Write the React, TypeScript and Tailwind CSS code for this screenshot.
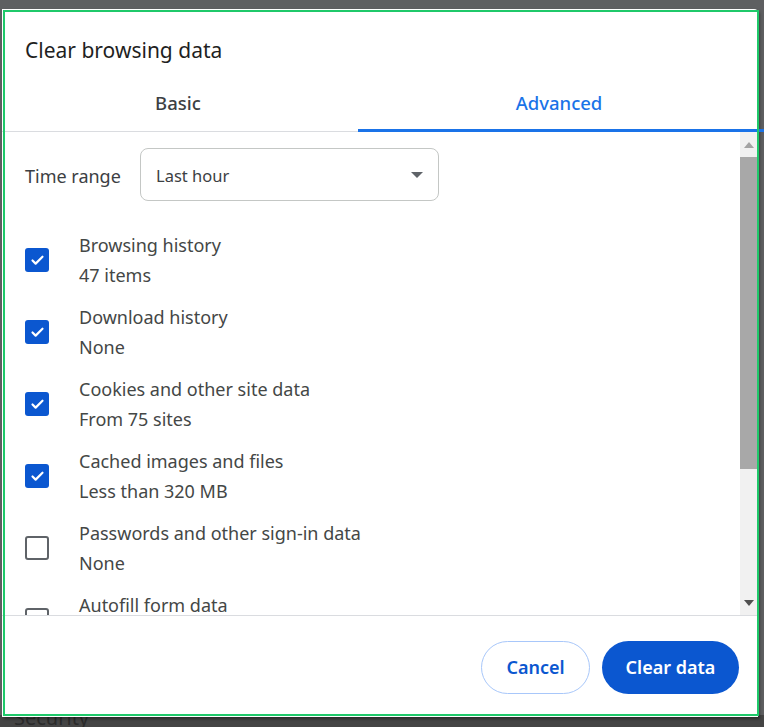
import { Check } from "lucide-react";

const items = [
  { label: "Browsing history", sub: "47 items", checked: true },
  { label: "Download history", sub: "None", checked: true },
  { label: "Cookies and other site data", sub: "From 75 sites", checked: true },
  { label: "Cached images and files", sub: "Less than 320 MB", checked: true },
  { label: "Passwords and other sign-in data", sub: "None", checked: false },
  { label: "Autofill form data", sub: "None", checked: false },
];

const font = { fontFamily: '"Noto Sans", "Open Sans", sans-serif' };

const CheckBox = ({ checked }: { checked: boolean }) =>
  checked ? (
    <div className="w-6 h-6 rounded-[3px] bg-[#0b57d0] flex items-center justify-center shrink-0">
      <Check size={15} strokeWidth={3.5} className="text-white" />
    </div>
  ) : (
    <div className="w-6 h-6 rounded-[3px] border-2 border-[#5f6368] shrink-0" />
  );

export default function App() {
  return (
    <div
      className="relative w-[764px] h-[727px] bg-[#5e5f61] overflow-hidden pt-[9px] pl-[2px]"
      style={font}
    >
      {/* page underneath the dialog */}
      <div className="absolute left-0 right-0 bottom-0 h-[12px] bg-[#444444]" />
      <div className="absolute left-[14px] top-[703px] text-[20px] text-[#2b2b2b]">Security</div>

      {/* Dialog */}
      <div className="relative w-[756px] h-[708px] bg-white rounded-tr-[4px] shadow-[2px_2px_3px_rgba(0,0,0,0.35)] flex flex-col">
        <div className="pt-[27px] pl-[23px] h-[69px] text-[21px] leading-[28px] text-[#1f1f1f]">
          Clear browsing data
        </div>

        {/* Tabs */}
        <div className="flex w-[762px] h-[54px] border-b border-[#dadce0]">
          <div className="w-[352px] flex items-center justify-center pb-[3px] text-[18.5px] font-medium text-[#3c4043]">
            Basic
          </div>
          <div className="relative flex-1 flex items-center justify-center pb-[3px] text-[18.5px] font-medium text-[#1a73e8]">
            Advanced
            <div className="absolute left-[4px] right-0 bottom-[-1px] h-[3px] bg-[#1a73e8]" />
          </div>
        </div>

        {/* Scroll area */}
        <div className="flex h-[484px] border-b border-[#dadce0]">
          <div className="flex-1 overflow-hidden pl-[23px] pt-[16px]">
            <div className="flex items-center h-[53px]">
              <div className="w-[115px] pt-[3px] text-[18px] text-[#3c4043]">Time range</div>
              <div className="w-[299px] h-[53px] rounded-[8px] border border-[#c4c7c5] flex items-center justify-between pl-[15px] pr-[15px]">
                <span className="pt-[3px] text-[16.5px] text-[#3c4043]">Last hour</span>
                <svg width="12" height="6" viewBox="0 0 12 6">
                  <path d="M0 0h12L6 6z" fill="#5f6368" />
                </svg>
              </div>
            </div>
            <div className="mt-[23px]">
              {items.map((it) => (
                <div key={it.label} className="flex items-center h-[72px]">
                  <CheckBox checked={it.checked} />
                  <div className="ml-[30px] text-[18px] leading-[30px] text-[#444746]">
                    <div>{it.label}</div>
                    <div>{it.sub}</div>
                  </div>
                </div>
              ))}
            </div>
          </div>

          {/* Scrollbar */}
          <div className="w-[17px] mr-[1px] bg-[#f1f1f1] flex flex-col">
            <div className="h-[25px] flex items-center justify-center">
              <svg width="10" height="6" viewBox="0 0 10 6">
                <path d="M5 0l5 6H0z" fill="#a3a3a3" />
              </svg>
            </div>
            <div className="h-[312px] bg-[#a8a8a8]" />
            <div className="flex-1" />
            <div className="h-[25px] flex items-center justify-center">
              <svg width="10" height="6" viewBox="0 0 10 6">
                <path d="M0 0h10L5 6z" fill="#505050" />
              </svg>
            </div>
          </div>
        </div>

        {/* Footer */}
        <div className="flex justify-end gap-[12px] pt-[25px] pr-[19px]">
          <button className="w-[109px] h-[53px] rounded-full border border-[#a8c7fa] text-[18px] font-semibold text-[#0b57d0]">
            Cancel
          </button>
          <button className="w-[137px] h-[53px] rounded-full bg-[#0b57d0] text-[18px] font-semibold text-white">
            Clear data
          </button>
        </div>

        {/* selection outline */}
        <div className="absolute left-[1px] top-[1px] right-[-1px] bottom-[1px] border-2 border-[#1fc96a] pointer-events-none" />
      </div>
    </div>
  );
}
